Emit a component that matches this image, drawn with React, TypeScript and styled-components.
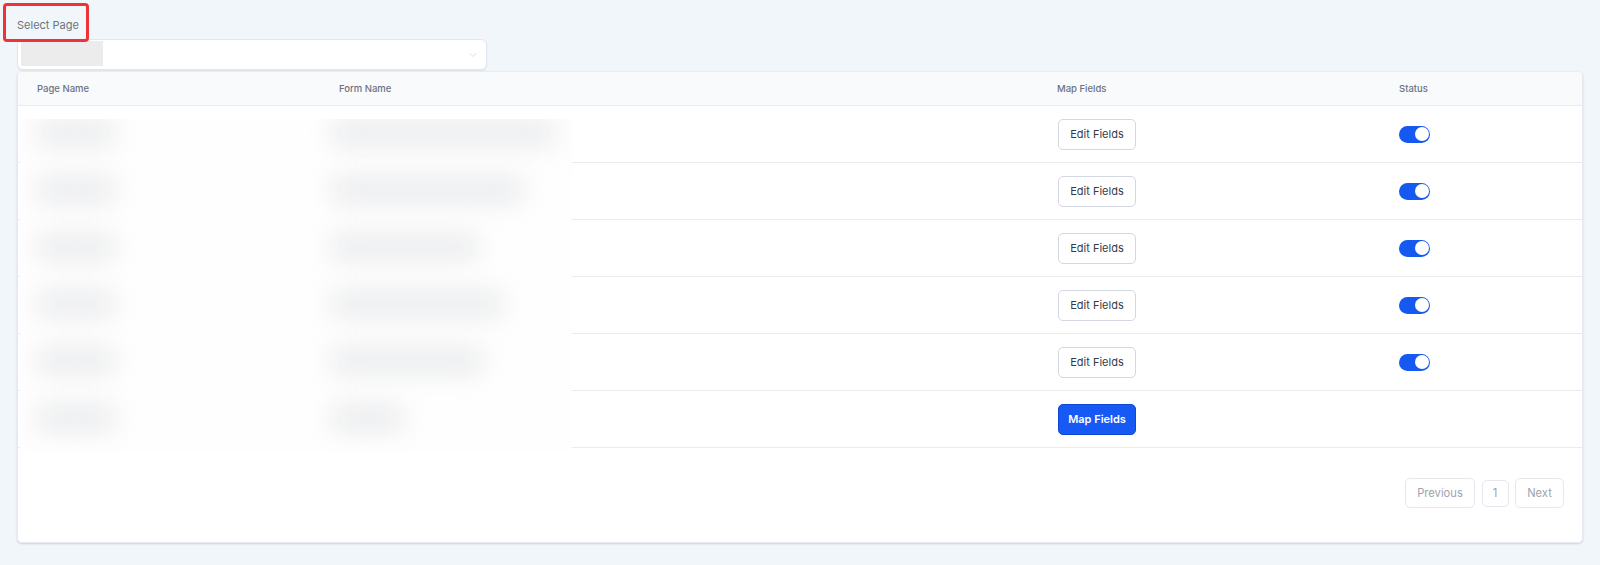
import React from "react";
import styled, { createGlobalStyle } from "styled-components";
import { ChevronDown } from "lucide-react";

const Global = createGlobalStyle`
  html, body { margin: 0; padding: 0; background: #f1f6fa; }
  * { box-sizing: border-box; }
  body { font-family: Inter, "Liberation Sans", sans-serif; }
`;

const Page = styled.div`
  position: relative;
  width: 1600px;
  height: 565px;
  padding: 0 17px;
  overflow: hidden;
`;

const Label = styled.div`
  height: 39px;
  padding-top: 16px;
  font-size: 11px;
  line-height: 18px;
  color: #6b7280;
`;

const Annotation = styled.div`
  position: absolute;
  left: 3px;
  top: 3px;
  width: 86px;
  height: 39px;
  border: 3px solid #ee3338;
  border-radius: 4px;
  z-index: 3;
`;

const Select = styled.div`
  display: flex;
  align-items: center;
  justify-content: space-between;
  width: 470px;
  height: 31px;
  padding: 0 7px 0 3px;
  background: #fff;
  border: 1px solid #e3e6ee;
  border-radius: 6px;
  box-shadow: 0 1px 1px rgba(100, 110, 130, 0.12);
  margin-bottom: 1px;
`;

const Masked = styled.div`
  width: 82px;
  height: 25px;
  margin-top: -2px;
  background: #ececec;
`;

const Chevron = styled(ChevronDown)`
  width: 12px;
  height: 12px;
  color: #c4c8d0;
  stroke-width: 1.2;
`;

const Card = styled.div`
  position: relative;
  width: 1566px;
  height: 472px;
  background: #fff;
  border: 1px solid #e6e9ef;
  border-top-color: #e9ecf1;
  border-radius: 5px;
  box-shadow: 0 1px 2px rgba(100, 110, 130, 0.25);
  overflow: hidden;
`;

const Table = styled.table`
  width: 100%;
  table-layout: fixed;
  border-collapse: collapse;
`;

const HeadCell = styled.th<{ $w?: number }>`
  width: ${(p) => (p.$w ? `${p.$w}px` : "auto")};
  height: 33px;
  padding: 0 0 0 19px;
  text-align: left;
  font-size: 9.5px;
  font-weight: 500;
  color: #6b7280;
  background: #f9fafc;
  border-bottom: 1px solid #e9ebf0;
`;

const Row = styled.tr`
  height: 57px;
`;

const Cell = styled.td`
  padding: 1px 0 0 19px;
  border-bottom: 1px solid #e9ebf0;
`;

const ActionButton = styled.button<{ $primary?: boolean }>`
  display: block;
  width: 78px;
  height: 31px;
  margin-left: 1px;
  padding: 0;
  border-radius: 5px;
  border: 1px solid ${(p) => (p.$primary ? "#0f48d0" : "#d3d7e2")};
  background: ${(p) => (p.$primary ? "#1659f5" : "#fff")};
  color: ${(p) => (p.$primary ? "#fff" : "#343c4c")};
  font-family: inherit;
  font-size: 11px;
  font-weight: ${(p) => (p.$primary ? 600 : 400)};
`;

const Toggle = styled.span`
  display: flex;
  justify-content: flex-end;
  align-items: center;
  width: 31px;
  height: 17px;
  padding-right: 1.5px;
  background: #1659f0;
  border-radius: 9px;
`;

const Knob = styled.span`
  width: 14px;
  height: 14px;
  border-radius: 50%;
  background: #fff;
`;

const BlurLayer = styled.div`
  position: absolute;
  left: 2px;
  top: 47px;
  width: 552px;
  height: 332px;
  background: #fefefe;
  overflow: hidden;
  display: grid;
  grid-template-rows: repeat(6, 57px);
  align-content: start;
`;

const BlurRow = styled.div`
  display: flex;
  align-items: center;
  height: 57px;
  margin-top: -15px;
  margin-bottom: 15px;
  padding-left: 18px;
`;

const Smudge = styled.div<{ $w: number }>`
  width: ${(p) => p.$w}px;
  height: 24px;
  background: #e9eaec;
  filter: blur(13px);
  flex: none;
`;

const PageSmudge = styled(Smudge)`
  margin-right: 218px;
`;

const Pagination = styled.div`
  position: absolute;
  right: 18px;
  top: 406px;
  display: flex;
  align-items: center;
  gap: 6.5px;
`;

const PageButton = styled.span<{ $w: number; $small?: boolean }>`
  display: flex;
  align-items: center;
  justify-content: center;
  width: ${(p) => p.$w}px;
  height: ${(p) => (p.$small ? 27 : 30)}px;
  border: 1px solid #e6e8ee;
  border-radius: 5px;
  font-size: 11.2px;
  color: #9ca3af;
  background: #fff;
`;

const rows = [
  { form: 222, edit: true },
  { form: 190, edit: true },
  { form: 146, edit: true },
  { form: 170, edit: true },
  { form: 150, edit: true },
  { form: 70, edit: false },
];

export default function App() {
  return (
    <Page>
      <Global />
      <Annotation />
      <Label>Select Page</Label>
      <Select>
        <Masked />
        <Chevron />
      </Select>
      <Card>
        <Table>
          <thead>
            <tr>
              <HeadCell $w={302}>Page Name</HeadCell>
              <HeadCell $w={718}>Form Name</HeadCell>
              <HeadCell $w={342}>Map Fields</HeadCell>
              <HeadCell>Status</HeadCell>
            </tr>
          </thead>
          <tbody>
            {rows.map((r, i) => (
              <Row key={i}>
                <Cell />
                <Cell />
                <Cell>
                  <ActionButton $primary={!r.edit}>{r.edit ? "Edit Fields" : "Map Fields"}</ActionButton>
                </Cell>
                <Cell>
                  {r.edit && (
                    <Toggle>
                      <Knob />
                    </Toggle>
                  )}
                </Cell>
              </Row>
            ))}
          </tbody>
        </Table>
        <BlurLayer>
          {rows.map((r, i) => (
            <BlurRow key={i}>
              <PageSmudge $w={76} />
              <Smudge $w={r.form} />
            </BlurRow>
          ))}
        </BlurLayer>
        <Pagination>
          <PageButton $w={70}>Previous</PageButton>
          <PageButton $w={27} $small>1</PageButton>
          <PageButton $w={49}>Next</PageButton>
        </Pagination>
      </Card>
    </Page>
  );
}
